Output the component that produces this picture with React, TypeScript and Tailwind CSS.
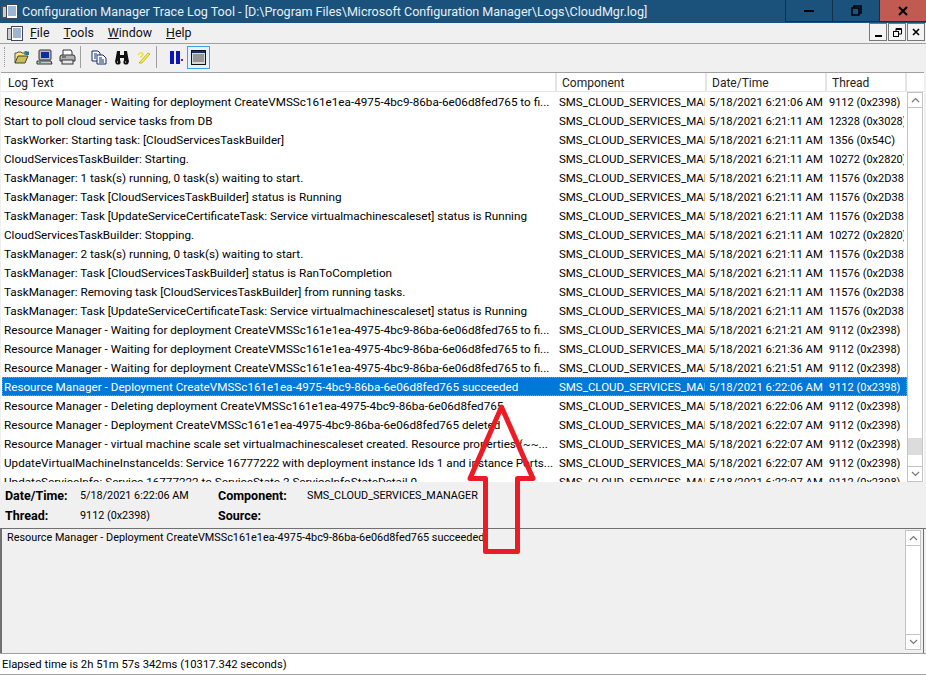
const WAITING = "Resource Manager - Waiting for deployment CreateVMSSc161e1ea-4975-4bc9-86ba-6e06d8fed765 to fi...";

const rows = [
  [WAITING, "5/18/2021 6:21:06 AM", "9112 (0x2398)"],
  ["Start to poll cloud service tasks from DB", "5/18/2021 6:21:11 AM", "12328 (0x3028)"],
  ["TaskWorker: Starting task: [CloudServicesTaskBuilder]", "5/18/2021 6:21:11 AM", "1356 (0x54C)"],
  ["CloudServicesTaskBuilder: Starting.", "5/18/2021 6:21:11 AM", "10272 (0x2820)"],
  ["TaskManager: 1 task(s) running, 0 task(s) waiting to start.", "5/18/2021 6:21:11 AM", "11576 (0x2D38)"],
  ["TaskManager: Task [CloudServicesTaskBuilder] status is Running", "5/18/2021 6:21:11 AM", "11576 (0x2D38)"],
  ["TaskManager: Task [UpdateServiceCertificateTask: Service virtualmachinescaleset] status is Running", "5/18/2021 6:21:11 AM", "11576 (0x2D38)"],
  ["CloudServicesTaskBuilder: Stopping.", "5/18/2021 6:21:11 AM", "10272 (0x2820)"],
  ["TaskManager: 2 task(s) running, 0 task(s) waiting to start.", "5/18/2021 6:21:11 AM", "11576 (0x2D38)"],
  ["TaskManager: Task [CloudServicesTaskBuilder] status is RanToCompletion", "5/18/2021 6:21:11 AM", "11576 (0x2D38)"],
  ["TaskManager: Removing task [CloudServicesTaskBuilder] from running tasks.", "5/18/2021 6:21:11 AM", "11576 (0x2D38)"],
  ["TaskManager: Task [UpdateServiceCertificateTask: Service virtualmachinescaleset] status is Running", "5/18/2021 6:21:11 AM", "11576 (0x2D38)"],
  [WAITING, "5/18/2021 6:21:21 AM", "9112 (0x2398)"],
  [WAITING, "5/18/2021 6:21:36 AM", "9112 (0x2398)"],
  [WAITING, "5/18/2021 6:21:51 AM", "9112 (0x2398)"],
  ["Resource Manager - Deployment CreateVMSSc161e1ea-4975-4bc9-86ba-6e06d8fed765 succeeded", "5/18/2021 6:22:06 AM", "9112 (0x2398)"],
  ["Resource Manager - Deleting deployment CreateVMSSc161e1ea-4975-4bc9-86ba-6e06d8fed765", "5/18/2021 6:22:06 AM", "9112 (0x2398)"],
  ["Resource Manager - Deployment CreateVMSSc161e1ea-4975-4bc9-86ba-6e06d8fed765 deleted", "5/18/2021 6:22:07 AM", "9112 (0x2398)"],
  ["Resource Manager - virtual machine scale set virtualmachinescaleset created. Resource properties {~~...", "5/18/2021 6:22:07 AM", "9112 (0x2398)"],
  ["UpdateVirtualMachineInstanceIds: Service 16777222 with deployment instance Ids 1 and instance Ports...", "5/18/2021 6:22:07 AM", "9112 (0x2398)"],
  ["UpdateServiceInfo: Service 16777222 to ServiceState 2 ServiceInfoStateDetail 0", "5/18/2021 6:22:07 AM", "9112 (0x2398)"],
];

function LogIcon({ className }: { className: string }) {
  return (
    <svg className={className} width="16" height="16" viewBox="0 0 16 16">
      <rect x="0.5" y="3.5" width="5" height="11" fill="#c8ccd4" stroke="#555" />
      <rect x="4.5" y="1.5" width="11" height="14" fill="#fff" stroke="#445" />
      <path d="M6 4h8M6 6h8M6 8h8M6 10h8M6 12h8" stroke="#3a6ea5" />
    </svg>
  );
}

function Chevron({ down }: { down?: boolean }) {
  return (
    <svg width="9" height="6" viewBox="0 0 9 6" fill="none" stroke="#777" strokeWidth="1.2">
      <path d={down ? "M1 1l3.5 3.5L8 1" : "M1 5l3.5-3.5L8 5"} />
    </svg>
  );
}

function ScrollBtn({ down }: { down?: boolean }) {
  return (
    <div className="w-[16px] h-[16px] flex items-center justify-center bg-white border border-[#c4c4c4] shrink-0">
      <Chevron down={down} />
    </div>
  );
}

function Toolbar() {
  return (
    <div className="h-[27px] flex items-center bg-[#f0f0f0] border-t border-[#a0a0a0] pl-[4px]">
      <div className="w-[2px] h-[20px] border-l border-dotted border-[#999] mr-[8px]" />
      <div className="flex items-center gap-[6px]">
        <svg width="16" height="16" viewBox="0 0 16 16">
          <path d="M1 14V4h2l1-1h3l1 1h3v2" fill="#ffe680" stroke="#554" />
          <path d="M1 14l3-7h10l-3 7z" fill="#c9bd5c" stroke="#443" />
          <path d="M10 3q2-2 4 0l1-1v4h-4l1-1q-1-1-2-2" fill="#2a7a8a" />
        </svg>
        <svg width="17" height="17" viewBox="0 0 17 17">
          <rect x="3" y="1" width="12" height="10" rx="1" fill="#b8bcc4" stroke="#333" />
          <rect x="5" y="3" width="8" height="6" fill="#0d2f9e" />
          <path d="M1 12h14l1 3H1z" fill="#c8ccd0" stroke="#333" />
          <rect x="3" y="13" width="2" height="1" fill="#22aa44" />
        </svg>
        <svg width="17" height="16" viewBox="0 0 17 16">
          <path d="M4 6V1h8l1 2v3" fill="#fff" stroke="#333" />
          <path d="M1 8q0-2 2-2h11q2 0 2 2v4H1z" fill="#b0b4b8" stroke="#333" />
          <rect x="3" y="11" width="11" height="4" fill="#e8e8e8" stroke="#333" />
          <path d="M3 8h4" stroke="#333" />
        </svg>
      </div>
      <div className="w-px h-[22px] bg-[#a0a0a0] ml-[4px] mr-[10px]" />
      <div className="flex items-center gap-[7px]">
        <svg width="16" height="15" viewBox="0 0 16 15">
          <path d="M1 1h6l2 2v8H1z" fill="#fff" stroke="#0c2b6b" />
          <path d="M6 5h6l3 3v6H6z" fill="#fff" stroke="#0c2b6b" />
          <path d="M3 4h3M3 6h2M3 8h2M8 8h3M8 10h5M8 12h5" stroke="#0c2b6b" />
        </svg>
        <svg width="16" height="15" viewBox="0 0 16 15">
          <path d="M3 1h3v4h4V1h3l2 11h-5V8H6v4H1z" fill="#111" />
          <circle cx="4" cy="12" r="2.6" fill="#111" />
          <circle cx="12" cy="12" r="2.6" fill="#111" />
          <path d="M3 12h1M11 12h1" stroke="#fff" />
        </svg>
        <svg width="14" height="14" viewBox="0 0 14 14">
          <path d="M2 13L11 3l2 1-8 9z" fill="#ffef3a" stroke="#99901a" strokeWidth="0.6" />
          <path d="M1 5q3-4 5-1-1 3-3 3" fill="none" stroke="#e8dc20" strokeWidth="1.2" />
        </svg>
      </div>
      <div className="w-px h-[22px] bg-[#a0a0a0] ml-[5px] mr-[12px]" />
      <svg className="mr-[3px]" width="15" height="13" viewBox="0 0 15 13">
        <rect x="1" y="0" width="4" height="13" fill="#0c14c0" />
        <rect x="7" y="0" width="4" height="13" fill="#0c14c0" />
        <rect x="12" y="8" width="2" height="2" fill="#7a1090" />
      </svg>
      <div className="w-[23px] h-[23px] flex items-center justify-center border border-[#3aa3e8] bg-[#e5f1fb]">
        <svg width="15" height="15" viewBox="0 0 15 15">
          <rect x="0.5" y="0.5" width="14" height="14" fill="#d8d8d8" stroke="#111" />
          <rect x="1" y="1" width="13" height="2" fill="#16306e" />
          <path d="M2 5h11M2 7h11M2 9h11M2 11h11" stroke="#555" />
        </svg>
      </div>
    </div>
  );
}

export default function App() {
  return (
    <div className="relative w-[926px] h-[675px] overflow-hidden bg-[#f0f0f0] text-[11.7px] text-black font-['Roboto','Noto_Sans',sans-serif]">
      {/* title bar */}
      <div className="h-[23px] flex bg-[#1a527c] pl-[2px]">
        <LogIcon className="mt-[3px] mr-[4px]" />
        <span className="text-[12.55px] leading-[23px] text-[#e6eef5]">
          Configuration Manager Trace Log Tool - [D:\Program Files\Microsoft Configuration Manager\Logs\CloudMgr.log]
        </span>
        <div className="ml-auto flex h-[22px]">
          <div className="w-[47px] flex items-center justify-center border-l border-b border-[#12304a]">
            <div className="w-[10px] h-[2px] bg-black" />
          </div>
          <div className="w-[47px] flex items-center justify-center border-l border-b border-[#12304a]">
            <svg width="11" height="11" viewBox="0 0 11 11" fill="none" stroke="#000" strokeWidth="1.5">
              <rect x="1" y="3" width="7" height="7" />
              <path d="M3 3V1h7v7H8" />
            </svg>
          </div>
          <div className="w-[47px] flex items-center justify-center bg-[#c15a50] border-l border-b border-[#12304a]">
            <svg width="10" height="10" viewBox="0 0 10 10" stroke="#000" strokeWidth="2">
              <path d="M1 1l8 8M9 1l-8 8" />
            </svg>
          </div>
        </div>
      </div>

      {/* menu bar */}
      <div className="h-[20px] flex items-center bg-[#f0f0f0] pl-[7px]">
        <LogIcon className="mr-[7px]" />
        <div className="flex gap-[14px] text-[12.4px] text-[#111]">
          <span><span className="underline">F</span>ile</span>
          <span><span className="underline">T</span>ools</span>
          <span><span className="underline">W</span>indow</span>
          <span><span className="underline">H</span>elp</span>
        </div>
        <div className="ml-auto self-start flex gap-px pr-px">
          <div className="w-[18px] h-[18px] flex items-end justify-center pb-[3px] border border-[#777] bg-[#f4f4f4]">
            <div className="w-[7px] h-[2px] bg-black" />
          </div>
          <div className="w-[18px] h-[18px] flex items-center justify-center border border-[#777] bg-[#f4f4f4]">
            <svg width="9" height="9" viewBox="0 0 9 9" fill="none" stroke="#000">
              <rect x="0.5" y="3.5" width="5" height="5" />
              <path d="M3 3V.5h5.5V6H6M3 1.5h5" />
            </svg>
          </div>
          <div className="w-[18px] h-[18px] flex items-center justify-center border border-[#777] bg-[#f4f4f4]">
            <svg width="8" height="8" viewBox="0 0 8 8" stroke="#000" strokeWidth="1.6">
              <path d="M1 1l6 6M7 1L1 7" />
            </svg>
          </div>
        </div>
      </div>

      <Toolbar />

      {/* log list */}
      <div className="ml-px mr-[2px] h-[410px] mt-[2px] flex flex-col bg-white border-t border-[#a0a0a0] overflow-hidden">
        <div className="h-[19px] shrink-0 flex bg-white text-[#222] border-b border-[#e5e5e5] text-[12px]">
          <div className="w-[556px] pl-[7px] border-r-2 border-[#e5e5e5] leading-[20px]">Log Text</div>
          <div className="w-[150px] pl-[5px] border-r-2 border-[#e5e5e5] leading-[20px]">Component</div>
          <div className="w-[120px] pl-[5px] border-r-2 border-[#e5e5e5] leading-[20px]">Date/Time</div>
          <div className="w-[80px] pl-[5px] border-r-2 border-[#e5e5e5] leading-[20px]">Thread</div>
        </div>
        <div className="flex flex-1 min-h-0">
          <div className="w-[906px] overflow-hidden">
            {rows.map((row, i) => (
              <div
                key={i}
                className={
                  i === 15
                    ? "h-[19px] ml-px flex items-baseline leading-[18px] bg-[#0078d7] text-white border border-dotted border-[#e08a20]"
                    : "h-[19px] ml-px flex items-baseline leading-[18px] border border-transparent"
                }
              >
                <div className="w-[555px] pl-px whitespace-nowrap overflow-hidden">{row[0]}</div>
                <div className="w-[147px] pl-px text-[11.5px] whitespace-nowrap overflow-hidden">SMS_CLOUD_SERVICES_MANAGER</div>
                <div className="w-[123px] pl-[4px] text-[11.3px] whitespace-nowrap overflow-hidden">{row[1]}</div>
                <div className="w-[76px] pl-px text-[11px] whitespace-nowrap overflow-hidden">{row[2]}</div>
              </div>
            ))}
          </div>
          <div className="w-[17px] flex flex-col">
            <ScrollBtn />
            <div className="flex-1 flex flex-col justify-end border-x border-[#c4c4c4] w-[16px]">
              <div className="h-[17px] mb-[11px] bg-[#dcdcdc]" />
            </div>
            <ScrollBtn down />
          </div>
        </div>
      </div>

      {/* selected entry details */}
      <div className="h-[46px] flex flex-col gap-px pt-[4px] pl-[5px] text-[10.8px]">
        <div className="flex h-[19px] leading-[19px]">
          <span className="w-[75px] text-[12.5px] font-bold">Date/Time:</span>
          <span className="w-[138px]">5/18/2021 6:22:06 AM</span>
          <span className="w-[89px] text-[12.5px] font-bold">Component:</span>
          <span>SMS_CLOUD_SERVICES_MANAGER</span>
        </div>
        <div className="flex h-[19px] leading-[19px]">
          <span className="w-[75px] text-[12.5px] font-bold">Thread:</span>
          <span className="w-[138px]">9112 (0x2398)</span>
          <span className="w-[89px] text-[12.5px] font-bold">Source:</span>
        </div>
      </div>

      {/* message pane */}
      <div className="h-[125px] flex border-t border-l-2 border-[#707070]">
        <div className="flex-1 pl-[5px] text-[10.85px] leading-[18px]">
          Resource Manager - Deployment CreateVMSSc161e1ea-4975-4bc9-86ba-6e06d8fed765 succeeded
        </div>
        <div className="w-[19px] mr-[2px] flex flex-col border-r border-[#707070] pt-px pb-[3px]">
          <ScrollBtn />
          <div className="flex-1 w-[16px] border-x border-[#c4c4c4] bg-white" />
          <ScrollBtn down />
        </div>
      </div>

      {/* status bar */}
      <div className="h-[22px] pl-[2px] leading-[21px] text-[11.25px] bg-white border-y border-[#a0a0a0]">
        Elapsed time is 2h 51m 57s 342ms (10317.342 seconds)
      </div>

      {/* annotation arrow */}
      <svg className="absolute left-[460px] top-[398px]" width="84" height="162" viewBox="0 0 84 162" fill="none">
        <path d="M41.5 9L73 80.5H57.5V153.5H25.5V80.5H10z" stroke="#ed1c24" strokeWidth="5" strokeLinejoin="round" />
      </svg>
    </div>
  );
}
